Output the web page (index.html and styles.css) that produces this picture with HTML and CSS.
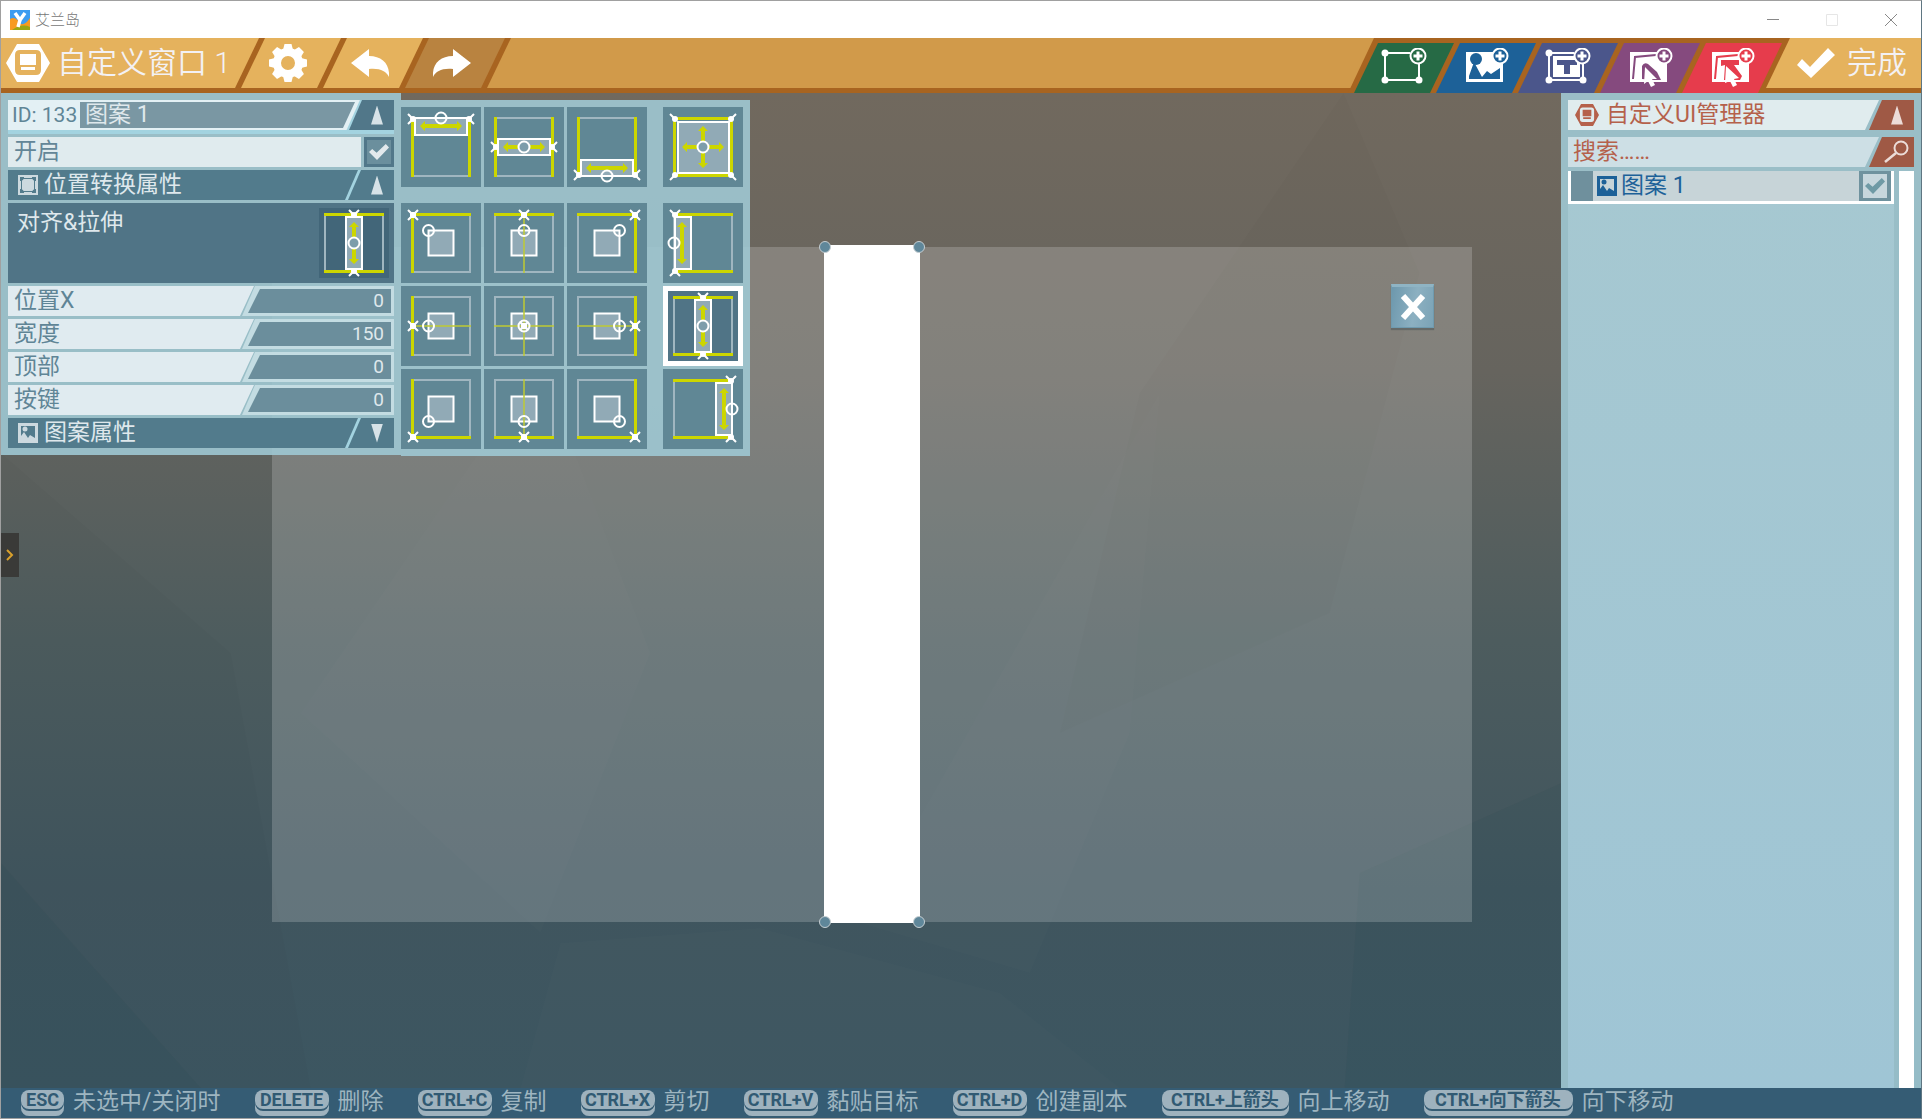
FILE: index.html
```html
<!DOCTYPE html>
<html lang="zh-CN">
<head>
<meta charset="utf-8">
<title>艾兰岛</title>
<link rel="stylesheet" href="styles.css">
</head>
<body>
<svg class="defs" aria-hidden="true">
  <defs>
    <g id="x4"><path class="w" d="M-5-5L5 5M5-5L-5 5"/><rect class="dot" x="-3" y="-3" width="6" height="6"/></g>
    <g id="x2"><path class="w" d="M-5-5L0 0L-5 5"/><circle class="dot" r="3"/></g>
    <g id="x1"><path class="w" d="M-5-5L0 0"/><circle class="dot" r="3"/></g>
    <g id="arrow"><path class="ya" d="M-17 0H17"/><path class="yf" d="M-21 0l5-5v10zM21 0l-5-5v10z"/></g>
    <rect id="frame" class="frame" x="11" y="11" width="58" height="58"/>
    <rect id="box" class="box" x="27.5" y="27.5" width="25" height="25"/>
    <g id="stretch-v">
      <use href="#frame"/><path class="y" d="M10 11.500H70M10 68.500H70"/>
      <rect class="box" x="32" y="14" width="16" height="52"/>
      <use href="#arrow" transform="translate(40 40) rotate(90)"/><circle class="ring full" cx="40" cy="40" r="5.500"/>
      <use href="#x2" transform="translate(40 12) rotate(90)"/><use href="#x2" transform="translate(40 68) rotate(-90)"/>
    </g>
    <g id="hex">
      <path fill="currentColor" fill-rule="evenodd" d="M11 0H33L44 19L33 38H11L0 19zM14 6Q9 6 9 11V26Q9 31 14 31H30Q35 31 35 26V11Q35 6 30 6z"/>
      <path fill="currentColor" d="M14 10H30V21H14zM15 23H29V26H15z"/>
    </g>
    <g id="picture">
      <path fill="currentColor" fill-rule="evenodd" d="M0 0H20V20H0zM3 3V13L6 9L10 15L12 12L17 15V3z"/>
      <circle cx="7" cy="6" r="2.500" fill="currentColor"/>
    </g>
    <g id="plus"><circle r="7.500" class="plus-ring"/><path d="M-4.500 0H4.500M0-4.500V4.500" class="plus-mark"/></g>
    <g id="nodes"><path class="l" d="M4 5H29M4 5V32H38V16"/><g fill="#fff"><circle cx="4" cy="5" r="3.500"/><circle cx="4" cy="32" r="3.500"/><circle cx="38" cy="32" r="3.500"/></g></g>
  </defs>
</svg>

<header class="titlebar">
  <svg class="app-icon" viewBox="0 0 20 20" aria-hidden="true">
    <path fill="#3d9cf0" d="M0 0H20V20H0z"/><path fill="#f79a22" d="M0 9Q5 6 9 12T20 8V20H0z"/><path fill="#9aa614" d="M2 20Q12 13 20 17V20z"/>
    <path d="M5 3L10 10L8 17M15 3L10 10" fill="none" stroke="#fff" stroke-width="3.500"/>
  </svg>
  <span class="app-name">艾兰岛</span>
  <div class="window-buttons">
    <button aria-label="最小化"><svg viewBox="0 0 12 12"><path d="M0 5.500H12"/></svg></button>
    <button aria-label="最大化" disabled><svg viewBox="0 0 12 12"><path d="M.5.5H11.500V11.500H.5z"/></svg></button>
    <button aria-label="关闭"><svg viewBox="0 0 12 12"><path d="M0 0L12 12M12 0L0 12"/></svg></button>
  </div>
</header>

<nav class="toolbar">
  <div class="nav-group">
    <h1 class="window-title"><svg width="44" height="38" viewBox="0 0 44 38" aria-hidden="true"><use href="#hex"/></svg>自定义窗口 1</h1>
    <button class="seg" aria-label="设置">
      <svg width="40" height="40" viewBox="-20 -20 40 40"><g fill="#fff"><path fill-rule="evenodd" d="M0-15A15 15 0 1 1 0 15A15 15 0 1 1 0-15M0-7A7 7 0 1 0 0 7A7 7 0 1 0 0-7"/>
      <path id="tooth" d="M-5-13L-3.500-19H3.500L5-13z"/><use href="#tooth" transform="rotate(45)"/><use href="#tooth" transform="rotate(90)"/><use href="#tooth" transform="rotate(135)"/><use href="#tooth" transform="rotate(180)"/><use href="#tooth" transform="rotate(225)"/><use href="#tooth" transform="rotate(270)"/><use href="#tooth" transform="rotate(315)"/></g></svg>
    </button>
    <button class="seg" aria-label="撤销"><svg width="38" height="28" viewBox="0 0 38 28"><path fill="#fff" d="M0 14L18 0V7C31 7 39 15 38 28C35 22 29 19 18 20V28z"/></svg></button>
    <button class="seg dim" aria-label="重做"><svg width="38" height="28" viewBox="0 0 38 28"><path fill="#fff" d="M38 14L20 0V7C7 7-1 15 0 28C3 22 9 19 20 20V28z"/></svg></button>
  </div>
  <div class="tool-group">
    <button class="tool green" aria-label="添加容器"><svg viewBox="0 0 46 40"><use href="#nodes"/><use href="#plus" x="37" y="8"/></svg></button>
    <button class="tool blue" aria-label="添加图案"><svg viewBox="0 0 46 40"><path fill="#fff" d="M3 4H40V34H3z"/><circle cx="13" cy="11" r="6" fill="currentColor"/><path fill="currentColor" d="M6 31V28L11 14L19 29L24 23L28 26L37 20V31z"/><use href="#plus" x="37" y="8"/></svg></button>
    <button class="tool indigo" aria-label="添加文本"><svg viewBox="0 0 46 40"><use href="#nodes"/><path fill="#fff" fill-rule="evenodd" d="M8 8H35V29H8zM12 12V17H19V26H25V17H32V12z"/><use href="#plus" x="37" y="8"/></svg></button>
    <button class="tool purple" aria-label="添加图案按钮"><svg viewBox="0 0 46 40"><path fill="#fff" d="M3 4H40V34H3z"/><path fill="none" stroke="currentColor" stroke-width="2" d="M6 31L8 9L29 7"/><path fill="currentColor" d="M15 31V18Q17 14 21 16L30 24L34 32H27z"/><path d="M18 19L30 31L25 31L28 37L24 39L21 33L17 36z" fill="#fff"/><use href="#plus" x="37" y="8"/></svg></button>
    <button class="tool red" aria-label="添加文本按钮"><svg viewBox="0 0 46 40"><path fill="#fff" d="M3 4H40V34H3z"/><path fill="none" stroke="currentColor" stroke-width="2" d="M6 31L8 9L29 7"/><path fill="currentColor" d="M12 12H30V17H25L33 28L31 32H15L16 17L12 18z"/><path d="M17 18L30 30L25 31L28 37L24 39L21 33L16 35z" fill="#fff"/><use href="#plus" x="37" y="8"/></svg></button>
    <button class="done"><svg width="38" height="30" viewBox="0 0 38 30" aria-hidden="true"><path fill="#fff" d="M0 17L5 11L13 19L31 0L38 7L14 30z"/></svg>完成</button>
  </div>
</nav>

<main class="workspace">
  <svg class="facets" viewBox="0 0 1922 995" preserveAspectRatio="none" aria-hidden="true">
    <path fill="#000" opacity=".015" d="M1344 0L1420 180L1330 520L1060 640L1140 300zM0 360L230 560L310 995H0z"/>
    <path fill="#fff" opacity=".012" d="M760 835L1000 900L1120 995H520L560 850zM540 270L650 560L540 840L300 620zM1160 300L1130 640L1030 880L860 830z"/>
    <path fill="#04343c" opacity=".05" d="M0 770L200 995H0zM1562 690L1360 780L1345 995H1562z"/>
  </svg>
  <div class="stage">
    <button class="stage-close" aria-label="关闭窗口"><svg width="26" height="26" viewBox="0 0 26 26"><path d="M3 2L23 24M23 2L3 24" stroke="#fff" stroke-width="6"/></svg></button>
    <div class="shape"><i class="handle tl"></i><i class="handle tr"></i><i class="handle bl"></i><i class="handle br"></i></div>
  </div>
  <button class="drawer-tab" aria-label="展开"><svg width="8" height="12" viewBox="0 0 8 12"><path d="M1 1L6 6L1 11" fill="none" stroke="#d9a02c" stroke-width="2"/></svg></button>

  <section class="inspector">
    <div class="id-row">
      <label for="name">ID: 133</label>
      <input id="name" value="图案 1">
      <button class="fold" aria-label="收起"><i class="tri"></i></button>
    </div>
    <div class="enable-row"><label for="enabled">开启</label><input id="enabled" type="checkbox" class="check" checked></div>
    <button class="section"><svg width="20" height="20" viewBox="0 0 20 20" aria-hidden="true"><path fill="#ccd9df" fill-rule="evenodd" d="M0 0H20V20H0zM2 2V6H3V14H2V18H6V17H14V18H18V14H17V6H18V2H14V3H6V2zM6 4H14L16 6V14L14 16H6L4 14V6z"/><path fill="#ccd9df" d="M6 4H14L16 6V14L14 16H6L4 14V6z"/></svg><span>位置转换属性</span><i class="slash"></i><i class="tri"></i></button>
    <div class="align-row"><span>对齐&amp;拉伸</span>
      <button aria-label="当前对齐方式"><svg width="70" height="70" viewBox="5 5 70 70"><use href="#stretch-v"/></svg></button></div>
    <div class="field"><label for="px">位置X</label><span class="slot"><input id="px" value="0"></span></div>
    <div class="field"><label for="wd">宽度</label><span class="slot"><input id="wd" value="150"></span></div>
    <div class="field"><label for="tp">顶部</label><span class="slot"><input id="tp" value="0"></span></div>
    <div class="field"><label for="bt">按键</label><span class="slot"><input id="bt" value="0"></span></div>
    <button class="section"><svg class="pale" width="20" height="20" viewBox="0 0 20 20" aria-hidden="true"><use href="#picture"/></svg><span>图案属性</span><i class="slash"></i><i class="tri down"></i></button>
  </section>

  <section class="anchors" aria-label="对齐与拉伸">
    <button aria-label="顶部拉伸"><svg viewBox="0 0 80 80"><use href="#frame"/><path class="y" d="M11.500 10V70M68.500 10V70"/><rect class="box" x="14" y="11" width="52" height="17"/><use href="#arrow" x="40" y="19"/><circle class="ring" cx="40" cy="11" r="5.500"/><use href="#x2" x="12" y="12"/><use href="#x2" transform="translate(68 12) rotate(180)"/></svg></button>
    <button aria-label="水平居中拉伸"><svg viewBox="0 0 80 80"><use href="#frame"/><path class="y" d="M11.500 10V70M68.500 10V70"/><rect class="box" x="14" y="32" width="52" height="16"/><use href="#arrow" x="40" y="40"/><circle class="ring full" cx="40" cy="40" r="5.500"/><use href="#x2" x="12" y="40"/><use href="#x2" transform="translate(68 40) rotate(180)"/></svg></button>
    <button aria-label="底部拉伸"><svg viewBox="0 0 80 80"><use href="#frame"/><path class="y" d="M11.500 10V70M68.500 10V70"/><rect class="box" x="14" y="53" width="52" height="16"/><use href="#arrow" x="40" y="61"/><circle class="ring" cx="40" cy="69" r="5.500"/><use href="#x2" x="12" y="68"/><use href="#x2" transform="translate(68 68) rotate(180)"/></svg></button>
    <button class="far" aria-label="全部拉伸"><svg viewBox="0 0 80 80"><rect class="y" x="11.500" y="11.500" width="57" height="57"/><rect class="box" x="15" y="15" width="51" height="51"/><use href="#arrow" x="40" y="40"/><use href="#arrow" transform="translate(40 40) rotate(90)"/><circle class="ring full" cx="40" cy="40" r="5.500"/><use href="#x1" x="12" y="12"/><use href="#x1" transform="translate(68 12) rotate(90)"/><use href="#x1" transform="translate(68 68) rotate(180)"/><use href="#x1" transform="translate(12 68) rotate(270)"/></svg></button>

    <button aria-label="左上"><svg viewBox="0 0 80 80"><use href="#frame"/><path class="y" d="M11.500 70V11.500H70"/><use href="#box"/><circle class="ring" cx="27.500" cy="27.500" r="5.500"/><use href="#x4" x="12" y="12"/></svg></button>
    <button aria-label="中上"><svg viewBox="0 0 80 80"><use href="#frame"/><use href="#box"/><path class="y" d="M10 11.500H70"/><path class="thin" d="M40 12V70"/><circle class="ring" cx="40" cy="27.500" r="5.500"/><use href="#x4" x="40" y="12"/></svg></button>
    <button aria-label="右上"><svg viewBox="0 0 80 80"><use href="#frame"/><path class="y" d="M10 11.500H68.500V70"/><use href="#box"/><circle class="ring" cx="52.500" cy="27.500" r="5.500"/><use href="#x4" x="68" y="12"/></svg></button>
    <button class="far" aria-label="左侧拉伸"><svg viewBox="0 0 80 80"><use href="#frame"/><path class="y" d="M10 11.500H70M10 68.500H70"/><rect class="box" x="12" y="14" width="16" height="52"/><use href="#arrow" transform="translate(19 40) rotate(90)"/><circle class="ring" cx="11" cy="40" r="5.500"/><use href="#x2" transform="translate(12 12) rotate(90)"/><use href="#x2" transform="translate(12 68) rotate(-90)"/></svg></button>

    <button aria-label="左中"><svg viewBox="0 0 80 80"><use href="#frame"/><path class="y" d="M11.500 10V70"/><use href="#box"/><path class="thin" d="M12 40H70"/><circle class="ring" cx="27.500" cy="40" r="5.500"/><use href="#x4" x="12" y="40"/></svg></button>
    <button aria-label="居中"><svg viewBox="0 0 80 80"><use href="#frame"/><use href="#box"/><path class="thin" d="M10 40H70M40 10V70"/><circle class="ring" cx="40" cy="40" r="5.500"/><rect class="dot" x="37" y="37" width="6" height="6"/><path class="w" d="M36 36L44 44M44 36L36 44"/></svg></button>
    <button aria-label="右中"><svg viewBox="0 0 80 80"><use href="#frame"/><path class="y" d="M68.500 10V70"/><use href="#box"/><path class="thin" d="M10 40H68"/><circle class="ring" cx="52.500" cy="40" r="5.500"/><use href="#x4" x="68" y="40"/></svg></button>
    <button class="far selected" aria-label="垂直居中拉伸" aria-pressed="true"><svg viewBox="5 5 70 70"><use href="#stretch-v"/></svg></button>

    <button aria-label="左下"><svg viewBox="0 0 80 80"><use href="#frame"/><path class="y" d="M11.500 10V68.500H70"/><use href="#box"/><circle class="ring" cx="27.500" cy="52.500" r="5.500"/><use href="#x4" x="12" y="68"/></svg></button>
    <button aria-label="中下"><svg viewBox="0 0 80 80"><use href="#frame"/><use href="#box"/><path class="y" d="M10 68.500H70"/><path class="thin" d="M40 10V68"/><circle class="ring" cx="40" cy="52.500" r="5.500"/><use href="#x4" x="40" y="68"/></svg></button>
    <button aria-label="右下"><svg viewBox="0 0 80 80"><use href="#frame"/><path class="y" d="M10 68.500H68.500V10"/><use href="#box"/><circle class="ring" cx="52.500" cy="52.500" r="5.500"/><use href="#x4" x="68" y="68"/></svg></button>
    <button class="far" aria-label="右侧拉伸"><svg viewBox="0 0 80 80"><use href="#frame"/><path class="y" d="M10 11.500H70M10 68.500H70"/><rect class="box" x="53" y="14" width="16" height="52"/><use href="#arrow" transform="translate(61 40) rotate(90)"/><circle class="ring" cx="69" cy="40" r="5.500"/><use href="#x2" transform="translate(68 12) rotate(90)"/><use href="#x2" transform="translate(68 68) rotate(-90)"/></svg></button>
  </section>

  <aside class="manager">
    <div class="bar head"><h2><svg width="24" height="22" viewBox="0 0 44 38" preserveAspectRatio="none" aria-hidden="true"><use href="#hex"/></svg>自定义UI管理器</h2><button aria-label="收起"><i class="tri"></i></button></div>
    <div class="bar search"><input type="text" aria-label="搜索" placeholder="搜索……"><button aria-label="搜索"><svg width="26" height="24" viewBox="0 0 26 24"><circle cx="17" cy="8" r="6.500" fill="none" stroke="#ecdcd8" stroke-width="2"/><path d="M12 13L1 22" stroke="#ecdcd8" stroke-width="2.500"/></svg></button></div>
    <div class="list">
      <ul>
        <li><i class="grip"></i><svg width="20" height="20" viewBox="0 0 20 20" aria-hidden="true"><use href="#picture"/></svg><label for="item1">图案 1</label><input id="item1" type="checkbox" class="check pale-check" checked></li>
      </ul>
      <div class="scroll"></div>
    </div>
  </aside>
</main>

<footer class="hints">
  <span><kbd class="k-s">ESC</kbd>未选中/关闭时</span>
  <span><kbd>DELETE</kbd>删除</span>
  <span><kbd>CTRL+C</kbd>复制</span>
  <span><kbd>CTRL+X</kbd>剪切</span>
  <span><kbd>CTRL+V</kbd>黏贴目标</span>
  <span><kbd>CTRL+D</kbd>创建副本</span>
  <span><kbd class="k-l">CTRL+上箭头</kbd>向上移动</span>
  <span><kbd class="k-xl">CTRL+向下箭头</kbd>向下移动</span>
</footer>
</body>
</html>
```
FILE: styles.css
```css
* { box-sizing: border-box; }
body {
  margin: 0;
  height: 100vh;
  display: flex;
  flex-direction: column;
  border: 1px solid #a0a0a0;
  border-right-color: #5f7682;
  font: 400 23px/30px Roboto, "Noto Sans CJK SC", sans-serif;
  overflow: hidden;
}
button, input { font: inherit; color: inherit; border: 0; margin: 0; padding: 0; border-radius: 0; background: none; outline: 0; }
svg { display: block; flex: none; }
h1, h2 { margin: 0; font: inherit; }
.defs { position: absolute; width: 0; height: 0; }

/* title bar */
.titlebar { height: 37px; flex: none; display: flex; align-items: center; gap: 5px; padding-left: 9px; background: #fff; }
.app-icon { width: 20px; height: 20px; }
.app-name { font-size: 15px; font-weight: 300; color: #777; }
.window-buttons { margin: 0 1px 0 auto; display: flex; }
.window-buttons button { width: 59px; height: 36px; display: grid; place-items: center; color: #888; }
.window-buttons button:disabled { color: #e6e6e6; }
.window-buttons svg { width: 12px; height: 12px; overflow: visible; }
.window-buttons path { fill: none; stroke: currentColor; }

/* toolbar */
.toolbar { height: 55px; flex: none; display: flex; justify-content: space-between; background: linear-gradient(#d19a4a 50px, #a86420 50px); color: #f3f1f4; font-size: 30px; font-weight: 350; }
.nav-group { display: flex; height: 50px; padding-right: 6px; background: #a86420; clip-path: polygon(0 0, 100% 0, calc(100% - 24px) 100%, 0 100%); }
.window-title { width: 258px; display: flex; align-items: center; gap: 7px; padding-left: 5px; background: #e5b25d; white-space: nowrap; clip-path: polygon(0 0, 100% 0, calc(100% - 24px) 100%, 0 100%); }
.window-title svg { color: #fff; }
.seg, .tool { width: 100px; height: 50px; margin-left: -18px; display: grid; place-items: center; clip-path: polygon(24px 0, 100% 0, calc(100% - 24px) 100%, 0 100%); }
.seg { background: #e5b25d; padding-right: 7px; }
.seg.dim { background: #b98340; }
.tool-group { display: flex; padding-left: 24px; background: #a86420; clip-path: polygon(26px 0, 100% 0, 100% 100%, 0 100%); }
.tool { margin-top: 5px; }
.tool svg { width: 46px; height: 40px; }
.green { background: #266a45; color: #266a45; }
.blue { background: #1d6198; color: #1d6198; }
.indigo { background: #4b568b; color: #4b568b; }
.purple { background: #854a7e; color: #854a7e; }
.red { background: #e63c4c; color: #e63c4c; }
.l { fill: none; stroke: #fff; stroke-width: 2; }
.plus-ring { fill: currentColor; stroke: #fff; stroke-width: 2; }
.plus-mark { stroke: #fff; stroke-width: 3; }
.done { width: 155px; height: 50px; margin-left: -16px; padding-left: 31px; display: flex; align-items: center; gap: 12px; background: #e5b25d; clip-path: polygon(24px 0, 100% 0, 100% 100%, 0 100%); white-space: nowrap; }

/* workspace */
.workspace { flex: 1; min-height: 0; position: relative; display: flex; align-items: flex-start; background: linear-gradient(#71695e, #66645e 28%, #4d5c5e 55%, #40555e 80%, #3c5661); }
.facets { position: absolute; inset: 0; width: 100%; height: 100%; }
.stage { position: absolute; left: 271px; top: 154px; width: 1200px; height: 675px; background: rgba(255, 255, 255, .19); }
.shape { position: absolute; left: 552px; top: -2px; width: 96px; height: 678px; background: #fff; }
.handle { position: absolute; width: 12px; height: 12px; border: 1px solid #c5ced2; border-radius: 50%; background: #5f879a; }
.tl { left: -5px; top: -4px; }
.tr { right: -5px; top: -4px; }
.bl { left: -5px; bottom: -5px; }
.br { right: -5px; bottom: -5px; }
.stage-close { position: absolute; left: 1119px; top: 37px; width: 43px; height: 44px; display: grid; place-items: center; border: 1px solid #6f9aae; border-top: 3px solid #8fb4c4; background: linear-gradient(100deg, #6d98ad, #8cb0c1 55%, #7ba3b6); box-shadow: 0 2px 1px #666a68; }
.drawer-tab { position: absolute; left: 0; top: 440px; width: 18px; height: 44px; display: grid; place-items: center; background: #3a3a38; }

/* inspector */
.inspector, .anchors, .manager { position: relative; background: rgba(158, 200, 211, .9); }
.inspector { width: 400px; padding: 7px; display: flex; flex-direction: column; gap: 3px; color: #dfe8ec; }
.tri { width: 12px; height: 19px; background: #d7e2e7; clip-path: polygon(50% 0, 100% 100%, 0 100%); }
.tri.down { clip-path: polygon(0 0, 100% 0, 50% 100%); }
.id-row { display: flex; width: 386px; height: 34px; border-bottom: 4px solid #a3d3e0; background: linear-gradient(114deg, #e3f0f4 321px, #a3d3e0 322px); }
.id-row label { width: 72px; padding-left: 4px; font-size: 21px; color: #5f8596; white-space: nowrap; }
.id-row input { width: 275px; height: 26px; margin-top: 2px; padding-left: 5px; background: #7a97a3; clip-path: polygon(0 0, 100% 0, calc(100% - 12px) 100%, 0 100%); }
.id-row .fold { width: 45px; height: 30px; margin-left: -6px; padding-left: 11px; display: grid; place-items: center; background: #517789; clip-path: polygon(13px 0, 100% 0, 100% 100%, 0 100%); }
.enable-row { display: flex; gap: 3px; height: 30px; }
.enable-row label { flex: 1; padding-left: 6px; background: #e0ebee; color: #638697; }
.check { appearance: none; width: 30px; height: 30px; border: 3px solid #517789; background: #6b8f9d; display: grid; place-items: center; }
.check::before { content: ""; width: 20px; height: 16px; background: #e3e9ec; clip-path: polygon(0 50%, 16% 32%, 38% 55%, 84% 0, 100% 22%, 40% 100%); }
.section { height: 30px; display: flex; align-items: center; padding: 0 10px; background: #527b8c; }
.section span { margin: 0 auto 0 6px; }
.section .slash { width: 16px; height: 30px; margin-right: 10px; background: #a3d3e0; clip-path: polygon(13px 0, 100% 0, 3px 100%, 0 100%); }
.pale { color: #ccd9df; }
.section .tri { margin-right: 1px; }
.align-row { height: 80px; display: flex; justify-content: space-between; padding: 5px 5px 5px 9px; background: #507486; }
.align-row button { width: 70px; height: 70px; background: #426679; }
.field { display: flex; height: 30px; }
.field label { width: 246px; padding-left: 6px; background: #e0ebf0; color: #5f8596; clip-path: polygon(0 0, 100% 0, calc(100% - 14px) 100%, 0 100%); }
.slot { flex: 1; margin-left: -12px; padding: 3px 3px 3px 6px; background: #c3dce2; clip-path: polygon(13px 0, 100% 0, 100% 100%, 0 100%); }
.slot input { display: block; width: 100%; height: 24px; padding-right: 7px; text-align: right; font-size: 19px; background: #6b8e9c; clip-path: polygon(12px 0, 100% 0, 100% 100%, 0 100%); }

/* anchor picker */
.anchors { width: 349px; margin-top: 7px; padding: 7px 7px 7px 0; display: grid; grid-template: 93px repeat(3, 80px) / repeat(4, 80px); gap: 3px; }
.anchors button { width: 80px; height: 80px; background: #608795; }
.anchors .far { margin-left: 13px; }
.anchors .selected { border: 5px solid #fff; background: #507486; }
.frame { fill: none; stroke: #a0b6c0; stroke-width: 2; }
.box { fill: #91aab6; stroke: #fff; stroke-width: 2; }
.y { fill: none; stroke: #ccd600; stroke-width: 3; }
.ya { stroke: #ccd600; stroke-width: 4; }
.yf { fill: #ccd600; }
.thin { fill: none; stroke: #bfca33; stroke-width: 1.5; }
.w { fill: none; stroke: #fff; stroke-width: 2; }
.dot { fill: #fff; }
.ring { fill: none; stroke: #fff; stroke-width: 2; }
.ring.full { fill: #7d9dab; }

/* manager */
.manager { width: 360px; height: 100%; margin-left: auto; padding: 7px 7px 0; display: flex; flex-direction: column; color: #b5614b; }
.bar { display: flex; height: 30px; margin-bottom: 7px; }
.bar h2, .bar input { width: 311px; padding-left: 7px; background: #e0ecee; clip-path: polygon(0 0, 100% 0, calc(100% - 14px) 100%, 0 100%); }
.bar h2 { display: flex; align-items: center; gap: 7px; }
.bar input { padding-left: 5px; background: #cddfe5; }
.bar input::placeholder { color: inherit; opacity: 1; }
.bar button { width: 45px; margin-left: -10px; padding-left: 11px; display: grid; place-items: center; background: #9f5945; clip-path: polygon(13px 0, 100% 0, 100% 100%, 0 100%); }
.bar .tri { background: #ecdcd8; }
.search { margin-bottom: 4px; }
.list { flex: 1; display: flex; gap: 5px; min-height: 0; }
.list ul { flex: 1; margin: 0; padding: 0; list-style: none; background: linear-gradient(#a6c8d1, #9fc5d5); }
.list li { display: flex; align-items: center; height: 33px; border: 3px solid #fff; border-top: 0; background: #c7d4d8; color: #1d6198; }
.grip { width: 22px; height: 30px; margin-right: 4px; background: #6f909d; }
.list label { flex: 1; padding-left: 4px; }
.pale-check { width: 32px; border-width: 3px 4px; border-color: #6f929e; background: #c7d7dd; }
.pale-check::before { background: #6f9aa5; }
.scroll { width: 15px; background: #fff; }

/* shortcut hints */
.hints { height: 30px; flex: none; display: flex; gap: 34px; padding-left: 20px; background: #355c74; color: #9eb5c0; white-space: nowrap; overflow: hidden; }
.hints span { display: flex; gap: 9px; line-height: 28px; }
kbd { width: 74px; height: 26px; margin-top: 2px; border-radius: 8px; background: #9eb2be; box-shadow: inset 0 -5px #9eb2be, inset 0 -7px #355c74; color: #315a73; font: 700 18px/19px Roboto, "Noto Sans CJK SC", sans-serif; text-align: center; }
.k-s { width: 43px; }
.k-l { width: 127px; }
.k-xl { width: 149px; }
```
